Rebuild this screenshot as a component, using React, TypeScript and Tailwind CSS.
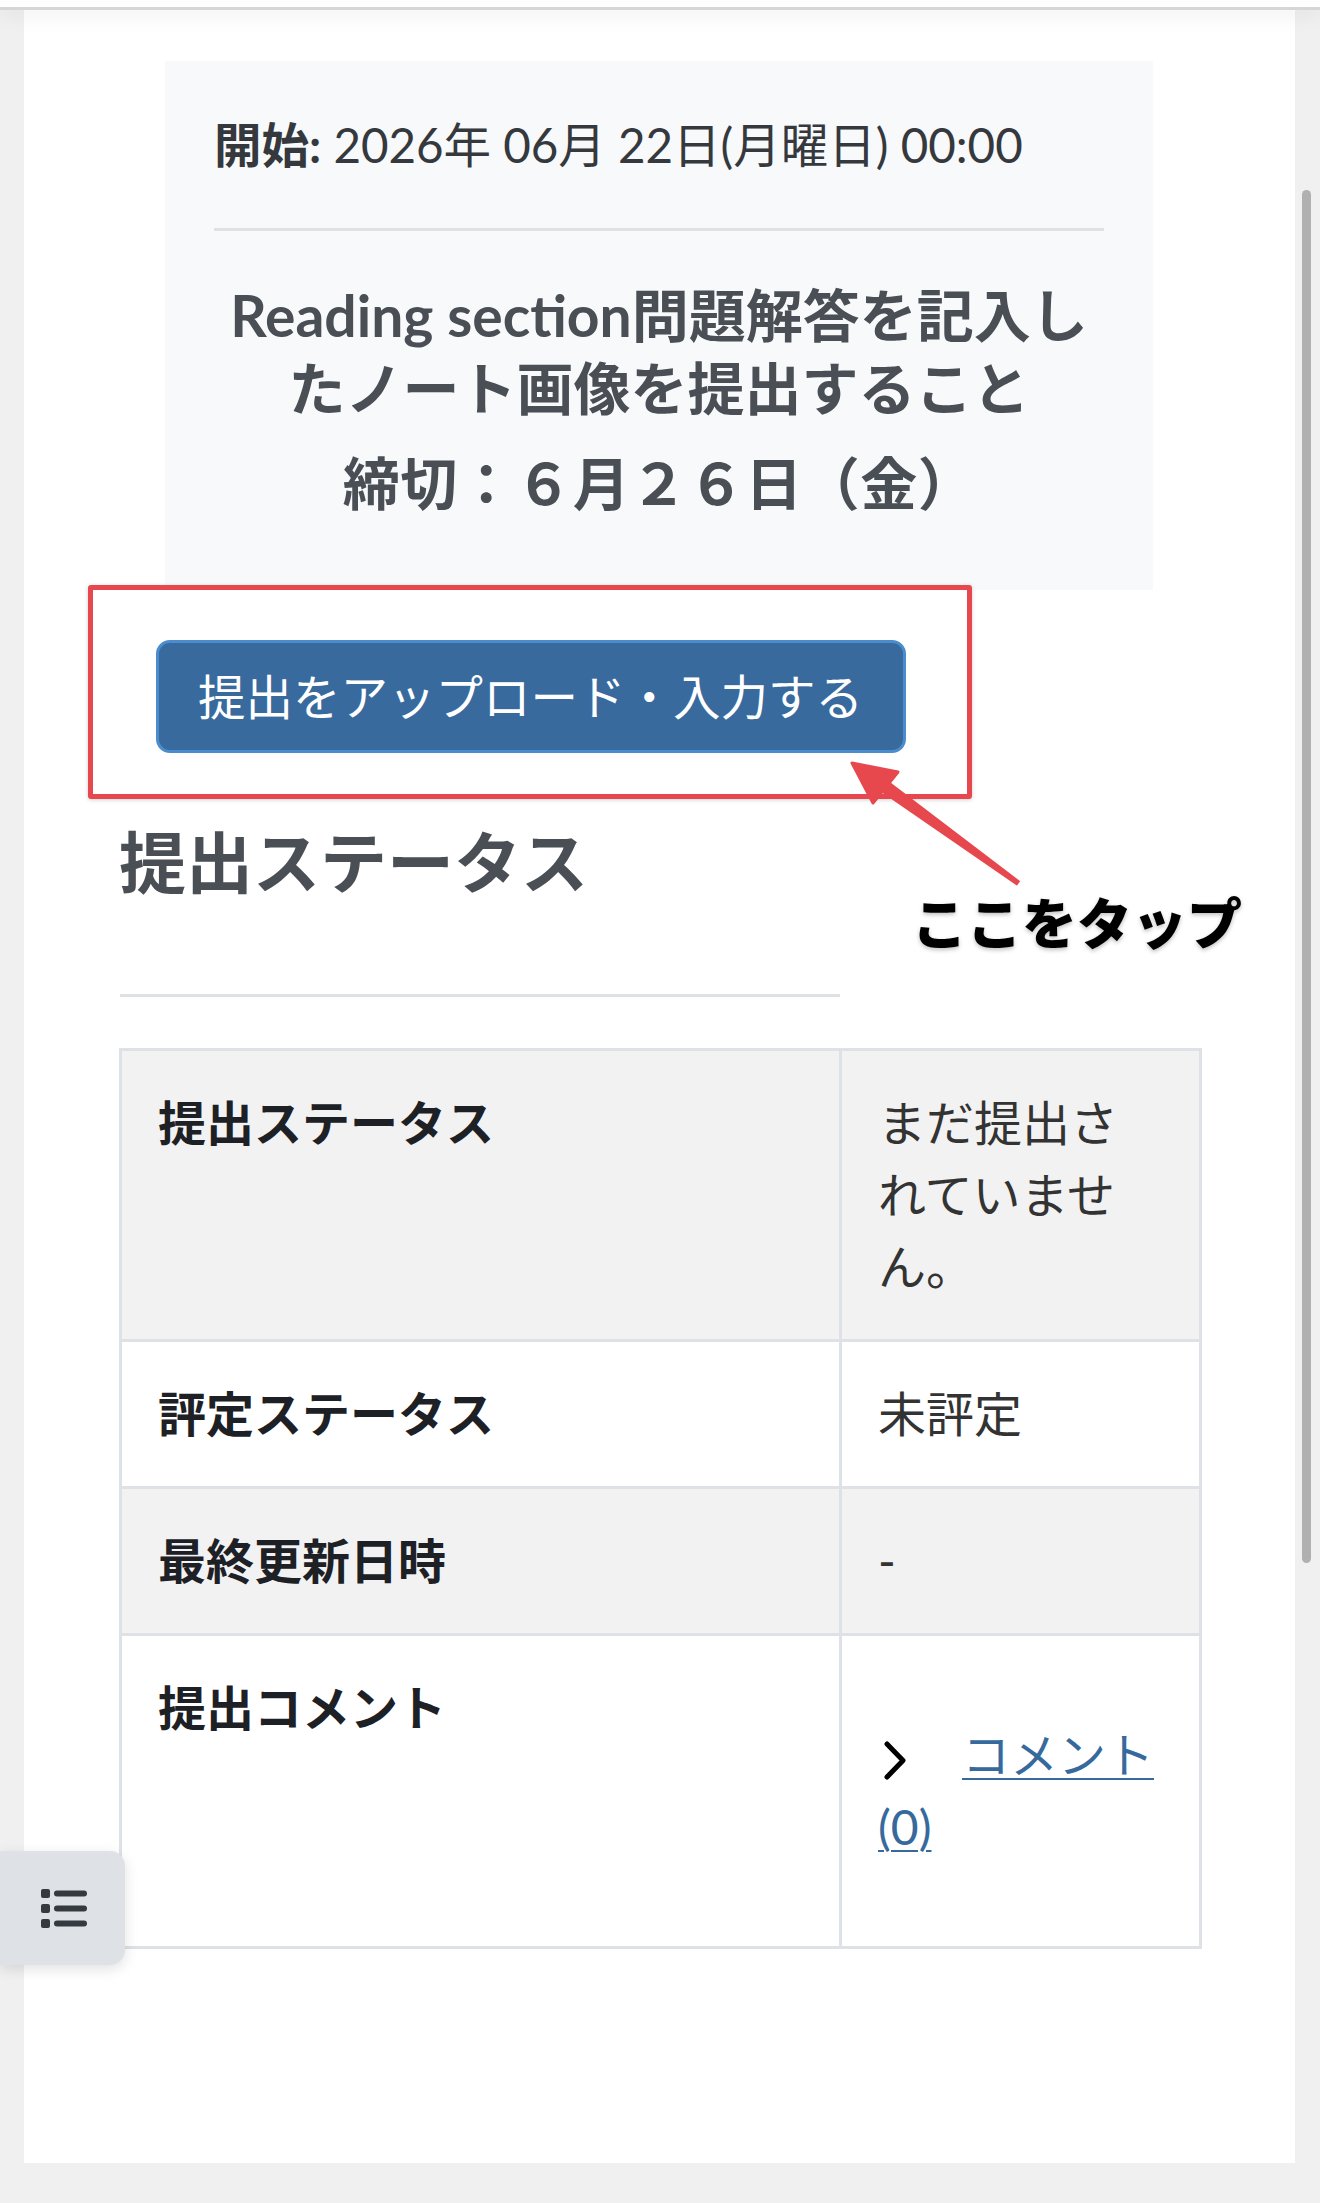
import React from "react";

interface StatusRow {
  label: string;
  value: string;
  shaded?: boolean;
}

const statusRows: StatusRow[] = [
  { label: "提出ステータス", value: "まだ提出されていません。", shaded: true },
  { label: "評定ステータス", value: "未評定" },
  { label: "最終更新日時", value: "-", shaded: true },
];

function ListIcon() {
  return (
    <svg width="47" height="40" viewBox="0 0 47 40" fill="#343a40">
      <rect x="1" y="1" width="9" height="9" rx="2" />
      <rect x="1" y="16" width="9" height="9" rx="2" />
      <rect x="1" y="31" width="9" height="9" rx="2" />
      <rect x="14" y="2.5" width="33" height="6" rx="3" />
      <rect x="14" y="17.5" width="33" height="6" rx="3" />
      <rect x="14" y="32.5" width="33" height="6" rx="3" />
    </svg>
  );
}

function Chevron() {
  return (
    <svg
      className="ml-[5px] mr-[55px] inline-block align-middle"
      width="24"
      height="41"
      viewBox="0 0 24 41"
      fill="none"
    >
      <polyline
        points="4,4 20,20.5 4,37"
        stroke="#000"
        strokeWidth="5"
        strokeLinecap="round"
        strokeLinejoin="round"
      />
    </svg>
  );
}

// red pointer from the note towards the upload button
function TapArrow() {
  return (
    <svg
      className="pointer-events-none absolute left-[816px] top-[740px]"
      width="190"
      height="150"
      viewBox="840 750 190 150"
    >
      <polygon
        points="876.5,787.9 883.5,778.1 1019.2,881.4 1016.8,884.6"
        fill="#e6484e"
        stroke="#e6484e"
        strokeWidth="1.5"
        strokeLinejoin="round"
      />
      <polygon
        points="852,763 898,772 873,803"
        fill="#e6484e"
        stroke="#e6484e"
        strokeWidth="3"
        strokeLinejoin="round"
      />
    </svg>
  );
}

export default function App() {
  return (
    <div className="relative min-h-[2203px] bg-[#f0f0f0] font-['Lato','Noto_Sans_CJK_JP',sans-serif] text-[#1d2125]">
      {/* bottom edge of the navbar */}
      <div className="relative z-10 h-[10px] border-b-[3px] border-[#d6d6d6] bg-white shadow-[0_6px_18px_rgba(0,0,0,0.07)]" />

      <div className="flex">
        <div className="w-[24px] flex-none" />

        <main className="relative h-[2153px] w-[1271px] flex-none bg-white">
          {/* activity dates + description */}
          <div className="ml-[141px] mt-[51px] w-[988px] bg-[#f8f9fa] px-[49px] pb-[70px] pt-[50px]">
            <p className="text-[47.5px] leading-[68px] text-[#35393e]">
              <strong className="font-bold">開始:</strong> 2026年 06月 22日(月曜日) 00:00
            </p>
            <hr className="mt-[49px] border-t-[3px] border-[#dee2e6]" />
            <h4 className="mt-[48px] text-center text-[57px] font-bold leading-[73px] text-[#4a4f56]">
              Reading section問題解答を記入したノート画像を提出すること
            </h4>
            <p className="mt-[22px] text-center text-[57px] font-bold leading-[73px] tracking-[0.5px] text-[#4a4f56]">
              締切：６月２６日（金）
            </p>
          </div>

          {/* highlighted upload button */}
          <div className="relative -mt-[5px] ml-[64px] h-[214px] w-[884px] rounded-[3px] border-[5px] border-[#e6484e] pl-[63px] pt-[50px] shadow-[0_1px_4px_rgba(0,0,0,0.18)]">
            <button className="flex h-[113px] w-[750px] items-center rounded-[14px] border-[3px] border-[#4b8dcc] bg-[#386a9e] pl-[39px] text-[47.5px] text-white">
              提出をアップロード・入力する
            </button>
          </div>

          <h2 className="ml-[95px] mt-[23px] text-[67px] font-bold leading-[80px] text-[#4a4e55]">
            提出ステータス
          </h2>
          <hr className="ml-[96px] mt-[92px] w-[720px] border-t-[3px] border-[#dee2e6]" />

          <table className="ml-[95px] mt-[51px] w-[1080px] table-fixed border-collapse text-[48px] leading-[72px]">
            <colgroup>
              <col className="w-[720px]" />
              <col className="w-[360px]" />
            </colgroup>
            <tbody>
              {statusRows.map((row) => (
                <tr key={row.label} className={row.shaded ? "bg-[#f2f2f2]" : "bg-white"}>
                  <th className="border-[3px] border-[#dee2e6] p-[36px] text-left align-top font-bold">
                    {row.label}
                  </th>
                  <td className="border-[3px] border-[#dee2e6] p-[36px] align-top text-[#333]">
                    {row.value}
                  </td>
                </tr>
              ))}
              <tr className="bg-white">
                <th className="border-[3px] border-[#dee2e6] p-[36px] text-left align-top font-bold">
                  提出コメント
                </th>
                <td className="border-[3px] border-[#dee2e6] p-[36px] align-top">
                  <div className="my-[47px]">
                    <Chevron />
                    <a
                      href="#"
                      className="text-[#376a9c] underline decoration-2 underline-offset-[5px]"
                    >
                      コメント (0)
                    </a>
                  </div>
                </td>
              </tr>
            </tbody>
          </table>

          <TapArrow />
          <span className="absolute left-[888px] top-[881px] text-[55px] font-black leading-[64px] text-black [text-shadow:0_2px_4px_rgba(0,0,0,0.25)]">
            ここをタップ
          </span>
        </main>

        {/* scrollbar */}
        <div className="w-[25px] flex-none">
          <div className="ml-[7px] mt-[180px] h-[1373px] w-[9px] rounded-full bg-[#b0b0b0]" />
        </div>
      </div>

      {/* drawer toggle */}
      <button className="absolute left-0 top-[1851px] flex h-[114px] w-[125px] items-center rounded-r-[15px] bg-[#dee2e6] pl-[40px] shadow-[0_4px_14px_rgba(0,0,0,0.12)]">
        <ListIcon />
      </button>
    </div>
  );
}
